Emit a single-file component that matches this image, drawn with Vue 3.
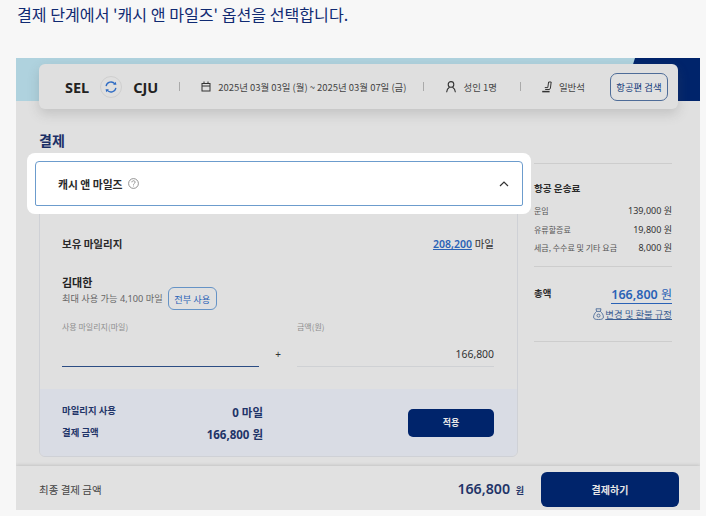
<script setup>
const fares = [
  { label: '운임', value: '139,000 원' },
  { label: '유류할증료', value: '19,800 원' },
  { label: '세금, 수수료 및 기타 요금', value: '8,000 원' }
]
</script>

<template>
  <div class="page">
    <p class="intro">결제 단계에서 '캐시 앤 마일즈' 옵션을 선택합니다.</p>
    <section class="stage">
      <div class="band"></div>
      <div class="navy"></div>

      <header class="search">
        <strong class="code">SEL</strong>
        <span class="swap">
          <svg width="14" height="14" viewBox="0 0 16 16" fill="none" stroke="#2f6cc4" stroke-width="1.5">
            <path d="M2.4 7A5.7 5.7 0 0 1 12.4 4.4" />
            <path d="M13.6 9A5.7 5.7 0 0 1 3.6 11.6" />
            <path d="M10.4 5.4h3.8l-.8-3.4z" fill="#2f6cc4" stroke="none" />
            <path d="M5.6 10.6H1.8l.8 3.4z" fill="#2f6cc4" stroke="none" />
          </svg>
        </span>
        <strong class="code">CJU</strong>
        <i class="sep first"></i>
        <svg class="ic-cal" width="10" height="11" viewBox="0 0 10 11" fill="none" stroke="#333" stroke-width="1">
          <rect x="1" y="2.5" width="8" height="7.5" />
          <path d="M1 5h8M3 .5v2M7 .5v2" />
        </svg>
        <span class="meta date">2025년 03월 03일 (월) ~ 2025년 03월 07일 (금)</span>
        <i class="sep second"></i>
        <svg class="ic-person" width="10" height="12" viewBox="0 0 10 12" fill="none" stroke="#333" stroke-width="1.1">
          <circle cx="5" cy="3.4" r="2.8" />
          <path d="M.6 11.2c.3-2.7 1.7-4.3 2.8-5M9.4 11.2c-.3-2.7-1.7-4.3-2.8-5" />
        </svg>
        <span class="meta pax">성인 1명</span>
        <i class="sep third"></i>
        <svg class="ic-seat" width="10" height="12" viewBox="0 0 10 12" fill="none" stroke="#333" stroke-width="1">
          <path d="M6.6 1h2.6L8.4 7.2c-.1.8-.6 1.3-1.4 1.3H3.2" />
          <path d="M6.6 1 5.8 6.6H2.8" />
          <path d="M.2 10.6h7.4" stroke-width="1.5" />
        </svg>
        <span class="meta cabin">일반석</span>
        <button class="search-btn">항공편 검색</button>
      </header>

      <div class="content">
        <div class="left">
          <h1 class="title">결제</h1>
          <div class="highlight">
            <div class="accordion">
              <span class="acc-title">캐시 앤 마일즈</span>
              <svg class="help" width="11" height="11" viewBox="0 0 11 11" fill="none" stroke="#777" stroke-width=".8">
                <circle cx="5.5" cy="5.5" r="4.9" />
                <path d="M3.9 4.3c0-2.1 3.2-2 3.2-.1 0 1.2-1.6 1.2-1.6 2.5" />
                <path d="M5.5 7.6v.8" />
              </svg>
              <svg class="chev" width="10" height="6" viewBox="0 0 10 6" fill="none" stroke="#333" stroke-width="1.2">
                <path d="M1 5 5 1l4 4" />
              </svg>
            </div>
          </div>

          <div class="card">
            <div class="body">
              <div class="owned">
                <b>보유 마일리지</b>
                <span class="owned-val"><a>208,200</a> 마일</span>
              </div>
              <div class="name">김대한</div>
              <div class="limit">
                <span>최대 사용 가능 4,100 마일</span>
                <button class="all-btn">전부 사용</button>
              </div>
              <div class="fields">
                <div class="field">
                  <label>사용 마일리지(마일)</label>
                  <div class="input active"></div>
                </div>
                <span class="plus">+</span>
                <div class="field">
                  <label>금액(원)</label>
                  <div class="input">166,800</div>
                </div>
              </div>
            </div>
            <div class="sum">
              <dl class="sum-list">
                <div class="sum-row"><dt>마일리지 사용</dt><dd>0 마일</dd></div>
                <div class="sum-row"><dt>결제 금액</dt><dd>166,800 원</dd></div>
              </dl>
              <button class="apply">적용</button>
            </div>
          </div>
        </div>

        <aside class="right">
          <h2 class="fare-title">항공 운송료</h2>
          <div v-for="fare in fares" :key="fare.label" class="fare-row">
            <span>{{ fare.label }}</span>
            <span class="fare-val">{{ fare.value }}</span>
          </div>
          <div class="total">
            <b>총액</b>
            <span class="total-val">166,800 <small>원</small></span>
          </div>
          <div class="policy">
            <svg width="11" height="12" viewBox="0 0 11 12" fill="none" stroke="#3c5f92" stroke-width=".8">
              <path d="M3.6 3.4 3 .8h5l-.6 2.6z" />
              <path d="M3.6 3.4C1.8 5 .6 7 .6 9c0 2 1.6 2.5 4.9 2.5s4.9-.5 4.9-2.5c0-2-1.2-4-3-5.6" />
              <circle cx="5.5" cy="7.6" r="1.5" />
            </svg>
            <a>변경 및 환불 규정</a>
          </div>
        </aside>
      </div>

      <footer class="bottom">
        <span class="final-label">최종 결제 금액</span>
        <span class="final-val">166,800 <small>원</small></span>
        <button class="pay">결제하기</button>
      </footer>
    </section>
  </div>
</template>

<style scoped>
.page {
  width: 706px;
  height: 516px;
  overflow: hidden;
  background: #f7f7f7;
  font-family: "Noto Sans", "Noto Sans CJK KR", sans-serif;
  color: #333;
}
.intro {
  margin: 0;
  height: 58px;
  padding: 3px 0 0 17px;
  box-sizing: border-box;
  font: 400 16.1px/22px "Noto Sans CJK KR", sans-serif;
  color: #102a72;
}
.stage {
  position: relative;
  display: flex;
  flex-direction: column;
  width: 684px;
  height: 452px;
  margin-left: 16px;
  overflow: hidden;
  background: #e0e0e0;
}
.band {
  position: absolute;
  left: 0;
  top: 0;
  width: 100%;
  height: 43px;
  background: #afd2de;
}
.navy {
  position: absolute;
  left: 610px;
  top: 0;
  width: 74px;
  height: 43px;
  background: #00246b;
  clip-path: polygon(9px 0, 100% 0, 100% 100%, 0 100%, 4px 16px);
}
.search {
  position: relative;
  display: flex;
  align-items: center;
  height: 45px;
  margin: 6px 22px 0 23px;
  padding-left: 26px;
  border-radius: 6px;
  background: #dfdfdf;
  box-shadow: 0 5px 12px rgba(90, 90, 90, 0.22);
}
.code {
  font-size: 14.5px;
  font-weight: 700;
  color: #222;
  line-height: 16px;
}
.swap {
  display: flex;
  align-items: center;
  justify-content: center;
  width: 22px;
  height: 22px;
  margin: 0 11px 0 11px;
  border: 1px solid #cfcfcf;
  border-radius: 50%;
  box-sizing: border-box;
}
.sep {
  width: 1px;
  height: 9px;
  background: #aaa;
}
.sep.first { margin-left: 21px; margin-right: 21px; }
.sep.second { margin-left: 17px; margin-right: 22px; }
.sep.third { margin-left: 23px; margin-right: 21px; }
.meta {
  font: 400 9.45px/12px "Noto Sans CJK KR", sans-serif;
  color: #444;
  white-space: nowrap;
}
.date { margin-left: 7px; }
.pax { margin-left: 7px; }
.cabin { margin-left: 7px; }
.search-btn {
  width: 58px;
  height: 28px;
  margin-left: 25px;
  padding: 0;
  border: 1px solid #4e6c98;
  border-radius: 7px;
  background: #e1e1e1;
  font: 400 9.4px/12px "Noto Sans CJK KR", sans-serif;
  color: #123a7a;
  white-space: nowrap;
}
.content {
  display: flex;
  flex: 1;
  min-height: 0;
  padding-left: 23px;
}
.left {
  width: 479px;
}
.title {
  margin: 21px 0 3px;
  font: 700 14px/20px "Noto Sans CJK KR", sans-serif;
  color: #1b2f66;
}
.highlight {
  position: relative;
  z-index: 2;
  margin: 0 -13px 0 -12px;
  padding: 8px;
  border-radius: 8px;
  background: #fff;
}
.accordion {
  display: flex;
  align-items: center;
  height: 45px;
  padding: 0 13px 0 22px;
  border: 1px solid #6c9ccd;
  border-bottom-width: 1.5px;
  border-radius: 4px 4px 2px 2px;
  box-sizing: border-box;
}
.acc-title {
  font: 700 10.8px/14px "Noto Sans CJK KR", sans-serif;
  color: #2a2a2a;
}
.help { margin-left: 5px; }
.chev { margin-left: auto; }
.card {
  display: flex;
  flex-direction: column;
  height: 251px;
  margin-top: -8px;
  border: 1px solid #cfd1d6;
  border-radius: 0 0 6px 6px;
  box-sizing: border-box;
  overflow: hidden;
}
.body {
  flex: 1;
  padding: 0 23px 0 22px;
}
.owned {
  display: flex;
  justify-content: space-between;
  align-items: center;
  margin-top: 28px;
  height: 18px;
}
.owned b {
  font: 700 10.5px/14px "Noto Sans CJK KR", sans-serif;
  color: #2a2a2a;
}
.owned-val {
  font: 400 10.5px/16px "Noto Sans", "Noto Sans CJK KR", sans-serif;
  color: #333;
}
.owned-val a {
  font-weight: 600;
  color: #2a62b6;
  text-decoration: underline;
}
.name {
  margin-top: 21px;
  font: 700 11px/16px "Noto Sans CJK KR", sans-serif;
  color: #222;
}
.limit {
  display: flex;
  align-items: center;
  gap: 5px;
  margin-top: -3px;
  font: 400 9.2px/14px "Noto Sans", "Noto Sans CJK KR", sans-serif;
  color: #666;
}
.all-btn {
  width: 49px;
  height: 23px;
  padding: 0;
  border: 1px solid #6593c6;
  border-radius: 6px;
  background: transparent;
  font: 400 9.2px/12px "Noto Sans CJK KR", sans-serif;
  color: #2a62b6;
}
.fields {
  display: flex;
  align-items: flex-end;
  margin-top: 11px;
}
.field {
  width: 197px;
}
.field label {
  display: block;
  font: 400 8px/12px "Noto Sans CJK KR", sans-serif;
  color: #8e8e8e;
}
.input {
  height: 29px;
  margin-top: 5px;
  padding-top: 7px;
  border-bottom: 1px solid #cfd1d4;
  box-sizing: border-box;
  text-align: right;
  font: 400 10.4px/18px "Noto Sans", sans-serif;
  color: #333;
}
.input.active {
  border-bottom: 1px solid #2c4d84;
}
.plus {
  width: 38px;
  height: 25px;
  text-align: center;
  font: 400 10px/25px "Noto Sans", sans-serif;
  color: #333;
}
.sum {
  display: flex;
  align-items: center;
  height: 67px;
  padding: 0 23px 0 22px;
  background: #d9dce4;
}
.sum-list {
  width: 201px;
  margin: 0;
}
.sum-row {
  display: flex;
  justify-content: space-between;
  align-items: center;
  height: 22px;
}
.sum-row dt {
  margin-top: -2px;
  font: 700 9.4px/13px "Noto Sans CJK KR", sans-serif;
  color: #1f3468;
}
.sum-row dd {
  margin: 2px 0 0;
  font: 700 11.5px/16px "Noto Sans", "Noto Sans CJK KR", sans-serif;
  color: #1f3468;
}
.apply {
  width: 86px;
  height: 28px;
  margin: 1px 0 0 auto;
  padding: 0;
  border: 0;
  border-radius: 5px;
  background: #00246b;
  font: 700 9px/12px "Noto Sans CJK KR", sans-serif;
  color: #e6e6e6;
}
.right {
  width: 138px;
  height: 179px;
  margin: 54px 0 0 16px;
  border-top: 1px solid #cdcdcd;
  border-bottom: 1px solid #cdcdcd;
  box-sizing: border-box;
}
.fare-title {
  margin: 17px 0 0;
  font: 700 9.6px/14px "Noto Sans CJK KR", sans-serif;
  color: #2a2a2a;
}
.fare-row {
  display: flex;
  justify-content: space-between;
  align-items: center;
  height: 18.5px;
  font: 400 8px/12px "Noto Sans CJK KR", sans-serif;
  color: #555;
}
.fare-title + .fare-row { margin-top: 7px; }
.fare-val {
  font: 400 9px/12px "Noto Sans", "Noto Sans CJK KR", sans-serif;
  color: #333;
}
.fare-row:nth-of-type(3) {
  height: 27.5px;
  align-items: flex-start;
  padding-top: 3px;
  box-sizing: border-box;
  border-bottom: 1px solid #cdcdcd;
}
.total {
  display: flex;
  justify-content: space-between;
  align-items: flex-start;
  margin-top: 19px;
}
.total b {
  font: 700 9.4px/14px "Noto Sans CJK KR", sans-serif;
  color: #2a2a2a;
}
.total-val {
  border-bottom: 1px solid #2a62b6;
  font: 600 12.5px/17px "Noto Sans", "Noto Sans CJK KR", sans-serif;
  color: #2a62b6;
}
.total-val small {
  font-size: 12px;
  font-weight: 400;
}
.policy {
  display: flex;
  justify-content: flex-end;
  align-items: center;
  gap: 1px;
  margin-top: 4px;
  font: 400 9.4px/13px "Noto Sans CJK KR", sans-serif;
  color: #3c5f92;
}
.policy a {
  text-decoration: underline;
}
.bottom {
  position: relative;
  display: flex;
  align-items: center;
  height: 44px;
  padding: 3px 21px 0 23px;
  box-sizing: border-box;
  background: #e1e1e1;
  box-shadow: 0 -1px 3px rgba(100, 100, 100, 0.22);
}
.final-label {
  font: 400 10.5px/14px "Noto Sans CJK KR", sans-serif;
  color: #444;
}
.final-val {
  margin-left: auto;
  font: 600 14.2px/18px "Noto Sans", "Noto Sans CJK KR", sans-serif;
  color: #1f3468;
}
.final-val small {
  margin-left: 2px;
  font-size: 9px;
  font-weight: 700;
}
.pay {
  width: 138px;
  height: 35px;
  margin-left: 17px;
  padding: 0;
  border: 0;
  border-radius: 6px;
  background: #00246b;
  font: 700 10px/14px "Noto Sans CJK KR", sans-serif;
  color: #e6e6e6;
}
</style>
